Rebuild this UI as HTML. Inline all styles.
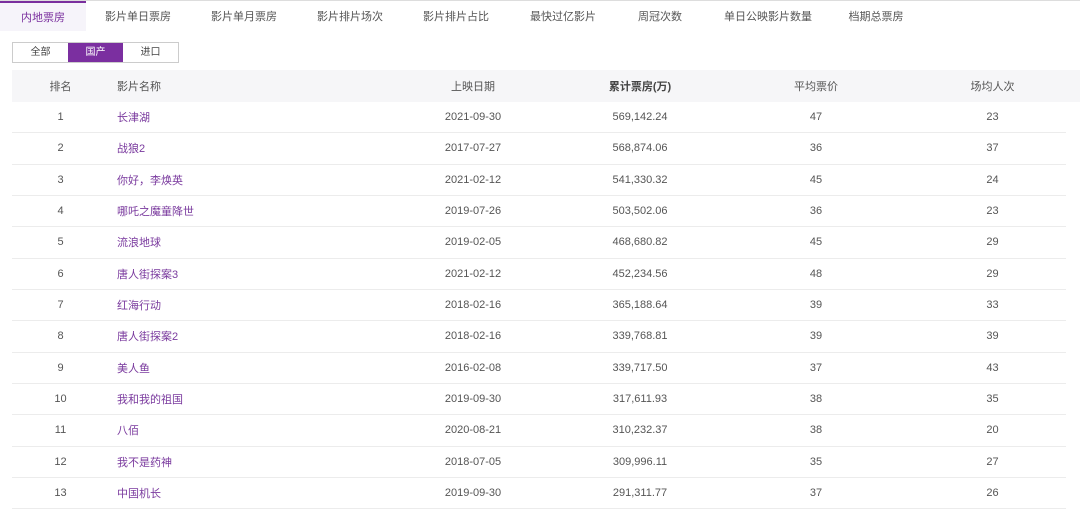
<!DOCTYPE html>
<html><head><meta charset="utf-8"><style>
body{margin:0;width:1080px;height:510px;overflow:hidden;background:#fff;font-family:"Liberation Sans","Noto Sans CJK SC",sans-serif;font-size:11px;color:#555}
.tabs{position:absolute;top:0;left:0;width:1080px;height:30px;border-top:1px solid #ddd;}
.tab{position:absolute;top:1px;height:29px;line-height:30px;text-align:center;color:#555}
.tab.act{background:#f6f4fa;color:#7a2f9e;border-top:2px solid #7a2f9e;top:0;height:28px}
.btns{position:absolute;top:42px;left:12px;display:flex;border:1px solid #ccc;box-sizing:border-box;height:21px}
.btns div{width:55px;text-align:center;line-height:19px;font-size:10px;color:#444}
.btns .on{background:#7b2fa0;color:#fff}
.hdrbg{position:absolute;top:70px;left:12px;width:1068px;height:32px;background:#f6f6f8}
table{position:absolute;top:70px;left:12px;width:1054px;border-collapse:collapse;table-layout:fixed}
th{height:32px;padding:0;font-weight:normal;color:#555;background:#f6f6f8}
td{height:30.33px;padding:0;border-bottom:1px solid #ececec;text-align:center;color:#555}
td.n,th.n{text-align:left;padding-left:8px}
td.n{color:#7a3a9e}
</style></head><body>
<div class="tabs">
<div class="tab act" style="left:0;width:86px">内地票房</div>
<div class="tab" style="left:98px;width:80px">影片单日票房</div>
<div class="tab" style="left:204px;width:80px">影片单月票房</div>
<div class="tab" style="left:310px;width:80px">影片排片场次</div>
<div class="tab" style="left:416px;width:80px">影片排片占比</div>
<div class="tab" style="left:523px;width:80px">最快过亿影片</div>
<div class="tab" style="left:620px;width:80px">周冠次数</div>
<div class="tab" style="left:718px;width:100px">单日公映影片数量</div>
<div class="tab" style="left:836px;width:80px">档期总票房</div>
</div>
<div class="btns"><div>全部</div><div class="on">国产</div><div>进口</div></div>
<div class="hdrbg"></div>
<table>
<colgroup><col style="width:97px"><col style="width:270px"><col style="width:188px"><col style="width:146px"><col style="width:206px"><col style="width:147px"></colgroup>
<tr><th>排名</th><th class="n">影片名称</th><th>上映日期</th><th style="font-weight:bold;color:#444">累计票房(万)</th><th>平均票价</th><th>场均人次</th></tr>
<tr><td>1</td><td class="n">长津湖</td><td>2021-09-30</td><td>569,142.24</td><td>47</td><td>23</td></tr>
<tr><td>2</td><td class="n">战狼2</td><td>2017-07-27</td><td>568,874.06</td><td>36</td><td>37</td></tr>
<tr><td>3</td><td class="n">你好，李焕英</td><td>2021-02-12</td><td>541,330.32</td><td>45</td><td>24</td></tr>
<tr><td>4</td><td class="n">哪吒之魔童降世</td><td>2019-07-26</td><td>503,502.06</td><td>36</td><td>23</td></tr>
<tr><td>5</td><td class="n">流浪地球</td><td>2019-02-05</td><td>468,680.82</td><td>45</td><td>29</td></tr>
<tr><td>6</td><td class="n">唐人街探案3</td><td>2021-02-12</td><td>452,234.56</td><td>48</td><td>29</td></tr>
<tr><td>7</td><td class="n">红海行动</td><td>2018-02-16</td><td>365,188.64</td><td>39</td><td>33</td></tr>
<tr><td>8</td><td class="n">唐人街探案2</td><td>2018-02-16</td><td>339,768.81</td><td>39</td><td>39</td></tr>
<tr><td>9</td><td class="n">美人鱼</td><td>2016-02-08</td><td>339,717.50</td><td>37</td><td>43</td></tr>
<tr><td>10</td><td class="n">我和我的祖国</td><td>2019-09-30</td><td>317,611.93</td><td>38</td><td>35</td></tr>
<tr><td>11</td><td class="n">八佰</td><td>2020-08-21</td><td>310,232.37</td><td>38</td><td>20</td></tr>
<tr><td>12</td><td class="n">我不是药神</td><td>2018-07-05</td><td>309,996.11</td><td>35</td><td>27</td></tr>
<tr><td>13</td><td class="n">中国机长</td><td>2019-09-30</td><td>291,311.77</td><td>37</td><td>26</td></tr>
</table>
</body></html>
